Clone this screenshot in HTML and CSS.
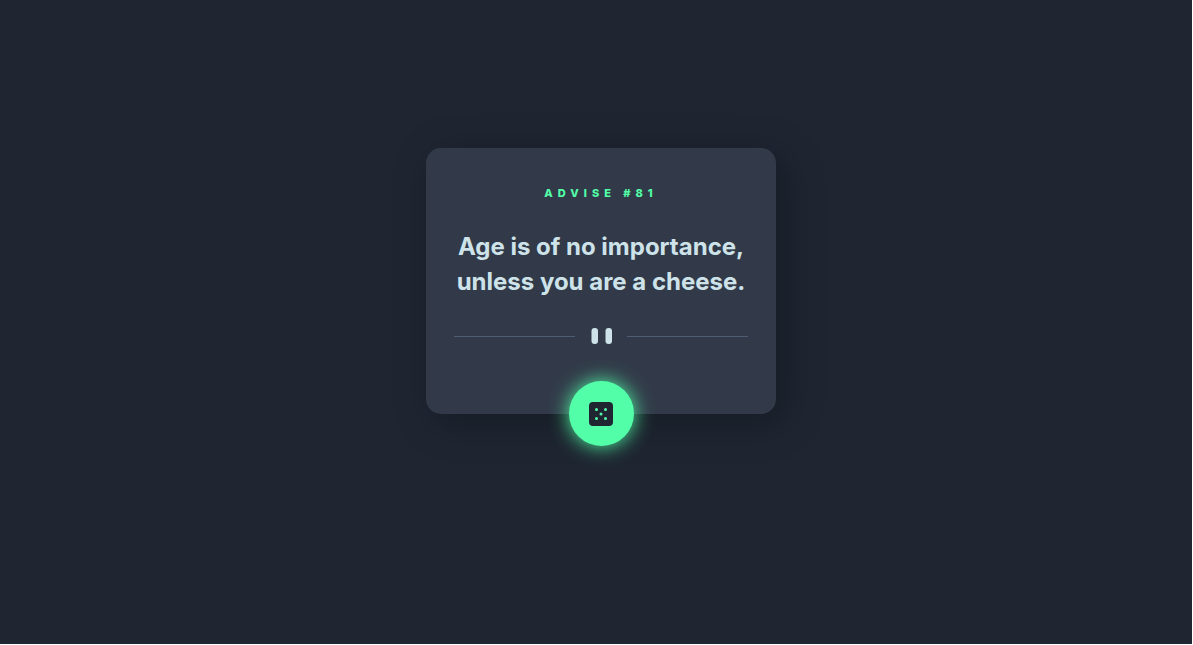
FILE: index.html
```html
<!DOCTYPE html>
<html lang="en">
<head>
<meta charset="utf-8">
<meta name="viewport" content="width=device-width, initial-scale=1">
<title>Advice Generator</title>
<link rel="stylesheet" href="styles.css">
</head>
<body>
<main class="page">
  <article class="card">
    <h1 class="card-label">ADVISE #81</h1>
    <p class="card-quote">Age is of no importance, unless you are a cheese.</p>
    <svg class="divider" viewBox="0 0 294 16" aria-hidden="true">
      <path fill="#4f5d74" d="M0 8h121v1H0zM173 8h121v1H173z"/>
      <g fill="#cee3e9"><rect x="137.500" width="6.500" height="16" rx="3"/><rect x="151.500" width="6.500" height="16" rx="3"/></g>
    </svg>
    <button class="dice" type="button" aria-label="New advice">
      <svg class="dice-icon" width="24" height="24" viewBox="0 0 24 24" aria-hidden="true"><path fill="#1f2632" d="M20 0H4a4 4 0 0 0-4 4v16a4 4 0 0 0 4 4h16a4 4 0 0 0 4-4V4a4 4 0 0 0-4-4ZM7.500 18a1.500 1.500 0 1 1 0-3 1.500 1.500 0 0 1 0 3Zm0-9a1.500 1.500 0 1 1 0-3 1.500 1.500 0 0 1 0 3Zm4.500 4.500a1.500 1.500 0 1 1 0-3 1.500 1.500 0 0 1 0 3Zm4.500 4.500a1.500 1.500 0 1 1 0-3 1.500 1.500 0 0 1 0 3Zm0-9a1.500 1.500 0 1 1 0-3 1.500 1.500 0 0 1 0 3Z"/></svg>
    </button>
  </article>
</main>
</body>
</html>
```
FILE: styles.css
```css
body {
  margin: 0;
  background: #fff;
  font-family: Inter, "Liberation Sans", sans-serif;
}
.page {
  box-sizing: border-box;
  min-height: calc(100vh - 1px);
  margin-right: 1px;
  padding: 0 16px 82px 26px;
  display: flex;
  align-items: center;
  justify-content: center;
  background: #1f2632;
}
.card {
  position: relative;
  box-sizing: border-box;
  width: 100%;
  max-width: 350px;
  padding: 38px 28px 70px;
  border-radius: 15px;
  background: #323a49;
  box-shadow: 8px 8px 40px rgba(0, 0, 0, 0.3);
  text-align: center;
}
.card-label {
  margin: 0;
  color: #52ffa8;
  font-size: 11px;
  line-height: 14px;
  font-weight: 800;
  letter-spacing: 5px;
}
.card-quote {
  margin: 29px 0 29px;
  color: #cee3e9;
  font-size: 24px;
  line-height: 35px;
  font-weight: 700;
}
.divider {
  display: block;
  width: 100%;
}
.dice {
  position: absolute;
  left: calc(50% - 32px);
  bottom: -32px;
  box-sizing: border-box;
  width: 65px;
  height: 65px;
  padding: 21px 21px 20px 20px;
  border: 0;
  border-radius: 50%;
  background: #52ffa8;
  box-shadow: 0 0 20px #52ffa8;
  cursor: pointer;
}
.dice-icon {
  display: block;
}
```
